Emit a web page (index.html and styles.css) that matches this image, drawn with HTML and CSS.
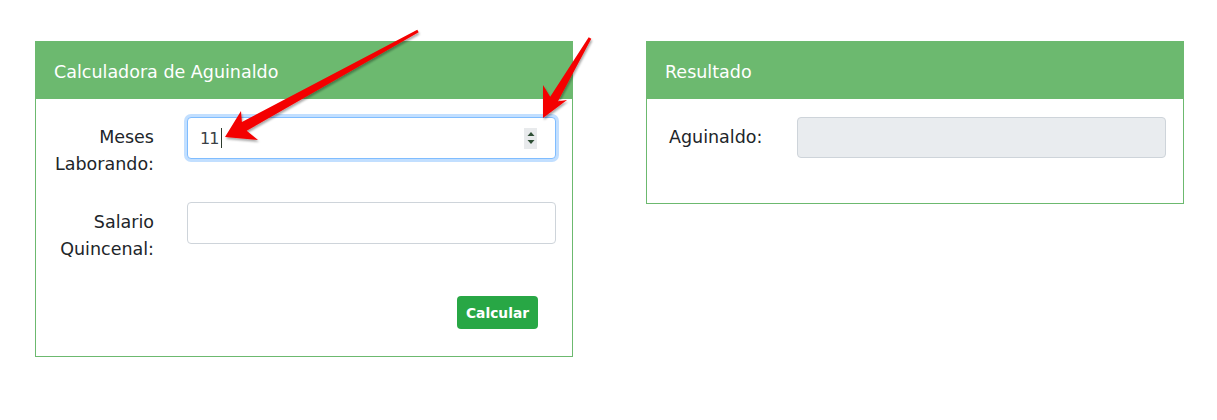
FILE: index.html
```html
<!DOCTYPE html>
<html lang="es">
<head>
	<meta charset="UTF-8">
	<meta name="viewport" content="width=device-width, initial-scale=1.0">
	<title>Calculadora de Aguinaldo</title>
	<link rel="stylesheet" href="styles.css">
</head>
<body>
	<div class="page">
		<!-- Calculator card -->
		<section class="card calc">
			<div class="card-header">Calculadora de Aguinaldo</div>
			<div class="card-body">
				<div class="form-row">
					<label class="field-label">Meses Laborando:</label>
					<div class="field focused">
						<span class="value">11</span><span class="caret"></span>
						<span class="spinner">
							<svg width="8" height="14" viewBox="0 0 8 14"><path d="M4 1 L7.5 5 L0.5 5 Z M0.5 9 L7.5 9 L4 13 Z" fill="#2f4f36"/></svg>
						</span>
					</div>
				</div>
				<div class="form-row">
					<label class="field-label">Salario Quincenal:</label>
					<div class="field"></div>
				</div>
				<div class="actions">
					<button class="btn">Calcular</button>
				</div>
			</div>
		</section>

		<!-- Result card -->
		<section class="card result">
			<div class="card-header">Resultado</div>
			<div class="card-body">
				<div class="form-row">
					<label class="field-label">Aguinaldo:</label>
					<div class="field readonly"></div>
				</div>
			</div>
		</section>

		<!-- Annotation arrows -->
		<svg class="arrows" width="1217" height="420" viewBox="0 0 1217 420">
			<defs>
				<filter id="shade" x="-20%" y="-20%" width="140%" height="140%">
					<feDropShadow dx="1" dy="2" stdDeviation="1.3" flood-color="#000" flood-opacity="0.35"/>
				</filter>
			</defs>
			<g fill="#f40000" filter="url(#shade)">
				<polygon points="417.3,29.7 241.9,122 241,111 225,137 258,140 246.7,130.8 418.7,32.3"/>
				<polygon points="588.7,37.2 550.2,96.7 543,85 543,118 567,100 558,101.3 591.3,38.8"/>
			</g>
		</svg>
	</div>
</body>
</html>
```

FILE: styles.css
```css
body {
	margin: 0;
	padding: 0;
	background-color: white;
	font-family: "DejaVu Sans", sans-serif;
	font-size: 17.5px;
	color: #212529;
}

.page {
	position: relative;
	display: flex;
	align-items: flex-start;
	gap: 73px;
	padding: 41px 0 0 35px;
	height: 420px;
	box-sizing: border-box;
}

/* Cards */
.card {
	width: 538px;
	box-sizing: border-box;
	border: 1px solid #6cb96f;
	background-color: white;
}

.card-header {
	height: 57px;
	line-height: 61px;
	padding-left: 18px;
	background-color: #6cb96f;
	color: white;
}

.card-body {
	padding: 18px 16px 27px 18px;
}

.result .card-body {
	padding: 18px 17px 21px 22px;
}

/* Form rows */
.form-row {
	display: grid;
	grid-template-columns: 100px 1fr;
	column-gap: 33px;
	align-items: start;
	margin-bottom: 24px;
}

.result .form-row {
	grid-template-columns: 110px 1fr;
	column-gap: 18px;
}

.field-label {
	padding-top: 7px;
	line-height: 27px;
	text-align: right;
}

.result .field-label {
	text-align: left;
}

.field {
	position: relative;
	display: flex;
	align-items: center;
	height: 42px;
	box-sizing: border-box;
	padding: 0 12px;
	border: 1px solid #ced4da;
	border-radius: 4px;
	background-color: white;
}

.field.focused {
	border-color: #80bdff;
	box-shadow: 0 0 0 3px #c2dfff;
}

.field.readonly {
	height: 41px;
	background-color: #e9ecef;
}

.value {
	color: #3a4046;
	font-size: 16px;
	letter-spacing: -1px;
}

.caret {
	width: 1px;
	height: 20px;
	margin-left: 3px;
	background-color: #2d3a2d;
}

.spinner {
	margin-left: auto;
	margin-right: 6px;
	width: 13px;
	height: 21px;
	display: flex;
	align-items: center;
	justify-content: center;
	background-color: #e8eaec;
}

/* Button */
.actions {
	display: flex;
	justify-content: flex-end;
	margin-top: 33px;
	padding-right: 18px;
}

.btn {
	height: 33px;
	padding: 0 9px;
	border: none;
	border-radius: 4px;
	background-color: #28a745;
	color: white;
	font-family: "DejaVu Sans", sans-serif;
	font-size: 13.8px;
	font-weight: bold;
}

/* Annotation overlay */
.arrows {
	position: absolute;
	top: 0;
	left: 0;
	pointer-events: none;
}
```
